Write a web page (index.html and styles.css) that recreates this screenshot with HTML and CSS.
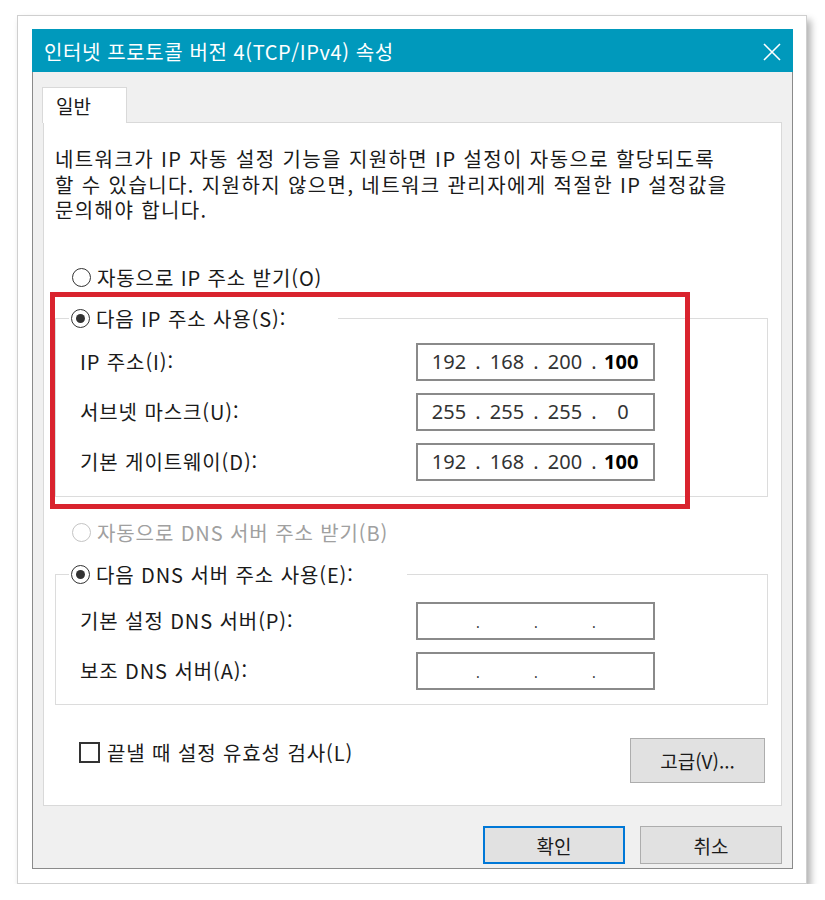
FILE: index.html
```html
<!DOCTYPE html>
<html lang="ko">

<head>
    <meta charset="UTF-8">
    <meta name="viewport" content="width=device-width, initial-scale=1.0">
    <title>인터넷 프로토콜 버전 4(TCP/IPv4) 속성</title>
    <link rel="stylesheet" href="styles.css">
</head>

<body>
    <div class="frame">
        <div class="dialog">
            <div class="titlebar">
                <span class="title">인터넷 프로토콜 버전 4(TCP/IPv4) 속성</span>
                <svg class="close" width="18" height="18" viewBox="0 0 18 18">
                    <path d="M1 1 L17 17 M17 1 L1 17" stroke="#ffffff" stroke-width="1.6" fill="none" />
                </svg>
            </div>
            <div class="body">
                <div class="tab">일반</div>
                <div class="panel">
                    <p class="intro">
                        네트워크가 IP 자동 설정 기능을 지원하면 IP 설정이 자동으로 할당되도록<br>
                        할 수 있습니다. 지원하지 않으면, 네트워크 관리자에게 적절한 IP 설정값을<br>
                        문의해야 합니다.
                    </p>

                    <div class="option option-auto"><span class="radio"></span>자동으로 IP 주소 받기(O)</div>

                    <!-- 고정 IP -->
                    <div class="group group-ip">
                        <div class="legend legend-ip"><span class="radio checked"></span>다음 IP 주소 사용(S):</div>
                        <div class="field">
                            <span class="field-label">IP 주소(I):</span>
                            <div class="ip-box">
                                <span class="octet">192</span><span class="dot">.</span>
                                <span class="octet">168</span><span class="dot">.</span>
                                <span class="octet">200</span><span class="dot">.</span>
                                <span class="octet strong">100</span>
                            </div>
                        </div>
                        <div class="field">
                            <span class="field-label">서브넷 마스크(U):</span>
                            <div class="ip-box">
                                <span class="octet">255</span><span class="dot">.</span>
                                <span class="octet">255</span><span class="dot">.</span>
                                <span class="octet">255</span><span class="dot">.</span>
                                <span class="octet">0</span>
                            </div>
                        </div>
                        <div class="field">
                            <span class="field-label">기본 게이트웨이(D):</span>
                            <div class="ip-box">
                                <span class="octet">192</span><span class="dot">.</span>
                                <span class="octet">168</span><span class="dot">.</span>
                                <span class="octet">200</span><span class="dot">.</span>
                                <span class="octet strong">100</span>
                            </div>
                        </div>
                    </div>

                    <div class="option option-disabled"><span class="radio"></span>자동으로 DNS 서버 주소 받기(B)</div>

                    <!-- DNS -->
                    <div class="group group-dns">
                        <div class="legend legend-dns"><span class="radio checked"></span>다음 DNS 서버 주소 사용(E):</div>
                        <div class="field">
                            <span class="field-label">기본 설정 DNS 서버(P):</span>
                            <div class="ip-box empty">
                                <span class="octet"></span><span class="dot">.</span>
                                <span class="octet"></span><span class="dot">.</span>
                                <span class="octet"></span><span class="dot">.</span>
                                <span class="octet"></span>
                            </div>
                        </div>
                        <div class="field">
                            <span class="field-label">보조 DNS 서버(A):</span>
                            <div class="ip-box empty">
                                <span class="octet"></span><span class="dot">.</span>
                                <span class="octet"></span><span class="dot">.</span>
                                <span class="octet"></span><span class="dot">.</span>
                                <span class="octet"></span>
                            </div>
                        </div>
                    </div>

                    <div class="panel-foot">
                        <div class="check"><span class="checkbox"></span>끝낼 때 설정 유효성 검사(L)</div>
                        <button class="btn btn-adv">고급(V)...</button>
                    </div>

                    <div class="highlight"></div>
                </div>

                <div class="footer">
                    <button class="btn btn-ok">확인</button>
                    <button class="btn">취소</button>
                </div>
            </div>
        </div>
    </div>
</body>

</html>
```

FILE: styles.css
```css
body {
    margin: 0;
    padding: 0;
    background-color: #ffffff;
    font-family: "Noto Sans CJK KR", "Noto Sans", sans-serif;
    color: #1a1a1a;
}

.frame {
    margin: 15px 0 0 17px;
    width: 790px;
    height: 869px;
    box-sizing: border-box;
    padding: 13px 0 0 14px;
    border: 1px solid #cfcfcf;
    background-color: #ffffff;
    box-shadow: 4px 5px 7px rgba(0, 0, 0, 0.3);
}

.dialog {
    width: 761px;
    box-sizing: border-box;
    border: 1px solid #8a8a8a;
    border-top: none;
    background-color: #f0f0f0;
}

.titlebar {
    height: 43px;
    background-color: #0099bc;
    display: flex;
    align-items: center;
    justify-content: space-between;
    padding: 0 12px 0 12px;
    margin: 0 -1px;
}

.title {
    color: #ffffff;
    font-size: 20px;
    letter-spacing: 0.6px;
    line-height: 43px;
    padding-top: 1px;
}

.close {
    display: block;
    margin-top: 2px;
}

.body {
    padding: 15px 10px 4px 10px;
}

.tab {
    width: 85px;
    height: 36px;
    box-sizing: border-box;
    margin-left: -1px;
    margin-bottom: -1px;
    padding: 2px 0 0 13px;
    border: 1px solid #d9d9d9;
    border-bottom: none;
    background-color: #ffffff;
    font-size: 19px;
    line-height: 32px;
    position: relative;
    z-index: 1;
}

.panel {
    position: relative;
    height: 684px;
    box-sizing: border-box;
    border: 1px solid #d9d9d9;
    background-color: #ffffff;
    padding: 23px 13px 0 11px;
}

.intro {
    margin: 0;
    font-size: 20px;
    line-height: 25.5px;
    letter-spacing: 1.4px;
    white-space: nowrap;
}

.option,
.legend,
.check {
    display: flex;
    align-items: center;
    font-size: 20px;
    line-height: 25.5px;
    letter-spacing: 0.9px;
    white-space: nowrap;
}

.option {
    padding-left: 17px;
}

.option-auto {
    margin-top: 42px;
}

.option-disabled {
    margin-top: 23px;
    color: #a0a0a0;
}

.radio {
    width: 19px;
    height: 19px;
    box-sizing: border-box;
    border: 1px solid #333333;
    border-radius: 50%;
    margin-right: 6px;
    position: relative;
    flex-shrink: 0;
}

.radio.checked::after {
    content: "";
    position: absolute;
    left: 4px;
    top: 4px;
    width: 9px;
    height: 9px;
    border-radius: 50%;
    background-color: #333333;
}

.option-disabled .radio {
    border-color: #c4c4c4;
}

.group {
    width: 713px;
    box-sizing: border-box;
    border: 1px solid #dcdcdc;
    padding-bottom: 15px;
}

.group-ip {
    margin-top: 28px;
}

.group-dns {
    margin-top: 29px;
    padding-bottom: 14px;
}

.legend {
    margin: -13px 0 0 13px;
    padding-left: 2px;
    box-sizing: border-box;
    background-color: #ffffff;
}

.legend-ip {
    width: 269px;
}

.legend-dns {
    width: 338px;
}

.field {
    display: flex;
    align-items: center;
    padding-left: 24px;
    margin-top: 12px;
}

.group-ip .legend + .field {
    margin-top: 11px;
}

.group-dns .legend + .field {
    margin-top: 14px;
}

.field-label {
    width: 336px;
    font-size: 20px;
    letter-spacing: 0.9px;
    white-space: nowrap;
}

.ip-box {
    width: 239px;
    height: 38px;
    box-sizing: border-box;
    border: 2px solid #8a8a8a;
    display: flex;
    align-items: center;
    padding-left: 11px;
    font-family: "Noto Sans", sans-serif;
    font-size: 20px;
    color: #333333;
}

.octet {
    width: 40px;
    text-align: center;
}

.octet.strong {
    text-align: left;
    padding-left: 1px;
    font-weight: bold;
    color: #000000;
}

.dot {
    width: 18px;
    text-align: center;
}

.ip-box.empty .dot {
    font-size: 14px;
    padding-top: 4px;
}

.panel-foot {
    width: 713px;
    margin-top: 33px;
    display: flex;
    justify-content: space-between;
    align-items: flex-start;
}

.check {
    margin: 2px 0 0 24px;
}

.checkbox {
    width: 21px;
    height: 21px;
    box-sizing: border-box;
    border: 2px solid #333333;
    margin-right: 7px;
}

.btn {
    height: 38px;
    width: 142px;
    box-sizing: border-box;
    border: 1px solid #adadad;
    background-color: #e1e1e1;
    font-family: "Noto Sans CJK KR", "Noto Sans", sans-serif;
    font-size: 19px;
    color: #1a1a1a;
    padding: 0;
}

.btn-adv {
    width: 135px;
    height: 45px;
    margin-right: 3px;
}

.btn-ok {
    border: 2px solid #0078d7;
}

.footer {
    display: flex;
    justify-content: flex-end;
    gap: 15px;
    margin-top: 20px;
}

/* annotation en rouge par-dessus le groupe IP */
.highlight {
    position: absolute;
    left: 6px;
    top: 169px;
    width: 640px;
    height: 217px;
    box-sizing: border-box;
    border: 5px solid #d9232e;
    pointer-events: none;
}
```
